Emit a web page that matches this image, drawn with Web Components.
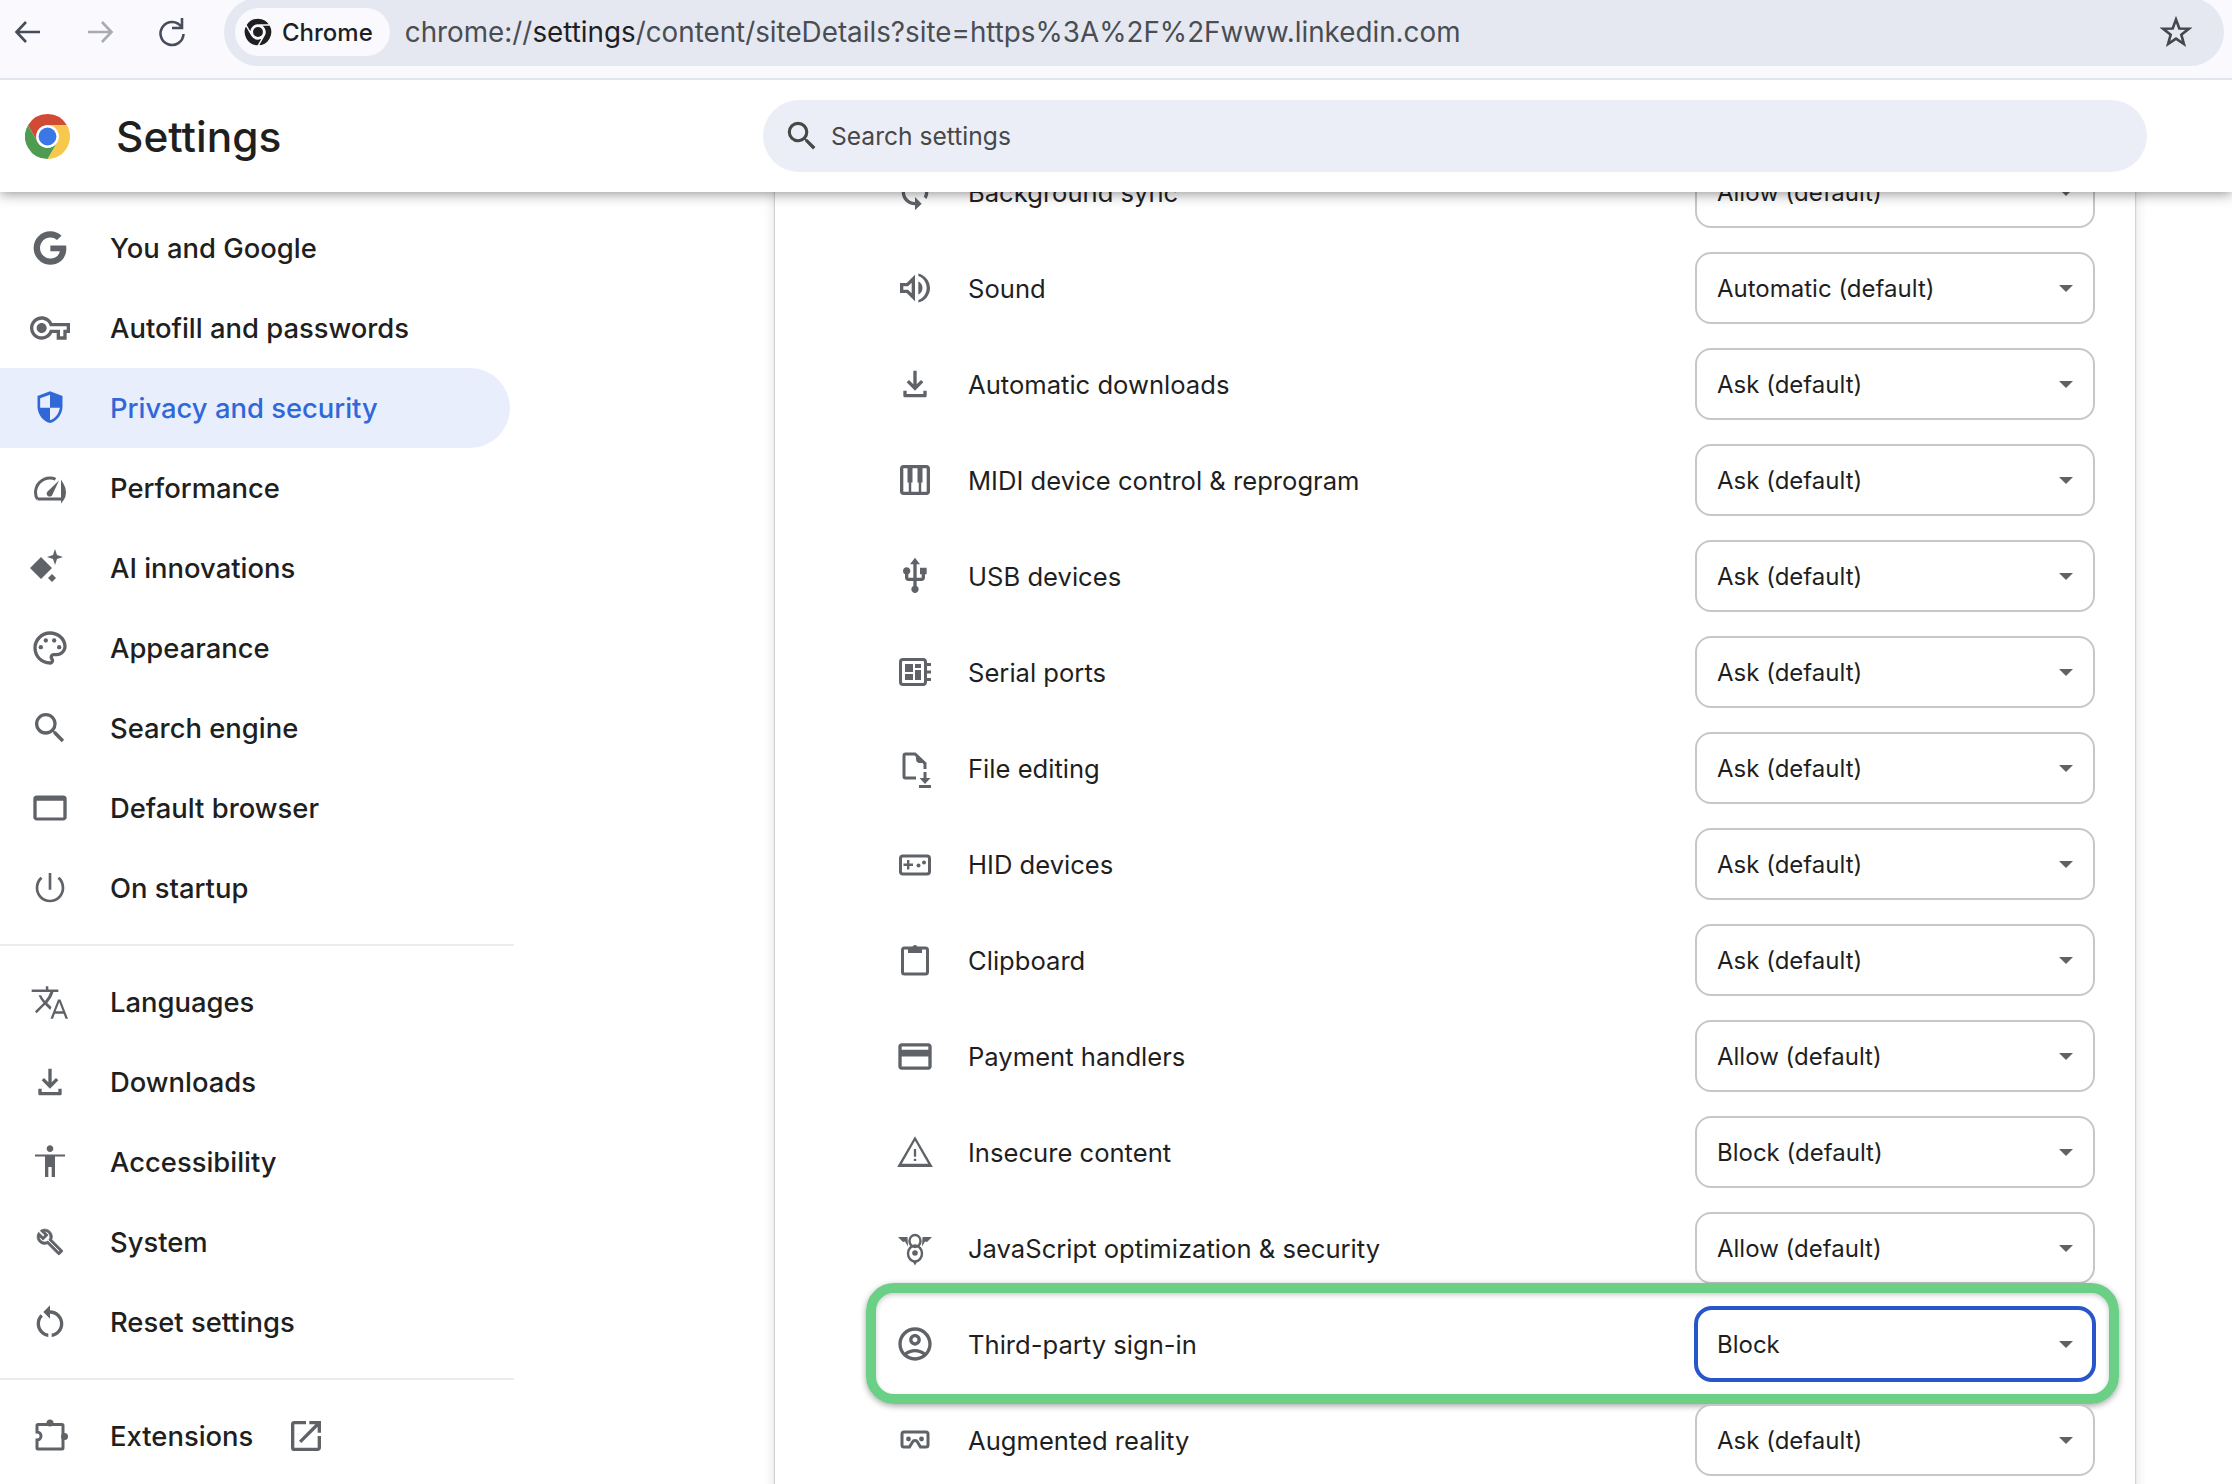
<!DOCTYPE html>
<html>
<head>
<meta charset="utf-8">
<title>Settings</title>
<style>
  html, body { margin: 0; height: 100%; overflow: hidden; background: #fff; }
  body { display: flex; flex-direction: column; font-family: Inter, "Liberation Sans", sans-serif; color: #1f1f1f; }
  settings-main { flex: 1; min-height: 0; }
</style>
</head>
<body>
<browser-bar url-start="chrome://" url-bold="settings" url-end="/content/siteDetails?site=https%3A%2F%2Fwww.linkedin.com"></browser-bar>
<settings-header></settings-header>
<settings-main>
  <settings-nav slot="nav"></settings-nav>
  <site-card slot="card"></site-card>
</settings-main>

<script>
const ICONS = {
  g: '<svg viewBox="-2.4 -2.4 28.8 28.8"><path d="M12.24 10.285V14.4h6.806c-.275 1.765-2.056 5.174-6.806 5.174-4.095 0-7.439-3.389-7.439-7.574s3.345-7.574 7.439-7.574c2.33 0 3.891.989 4.785 1.849l3.254-3.138C18.189 1.186 15.479 0 12.24 0c-6.635 0-12 5.365-12 12s5.365 12 12 12c6.926 0 11.52-4.869 11.52-11.726 0-.788-.085-1.39-.189-1.989H12.24z"/></svg>',
  key: '<svg viewBox="0 0 24 24"><path d="M22 19h-6v-4h-2.68c-1.14 2.42-3.6 4-6.32 4-3.86 0-7-3.14-7-7s3.14-7 7-7c2.72 0 5.17 1.58 6.32 4H24v6h-2v4zm-4-2h2v-4h2v-2H11.94l-.23-.67C11.01 8.34 9.11 7 7 7c-2.76 0-5 2.24-5 5s2.24 5 5 5c2.11 0 4.01-1.34 4.71-3.33l.23-.67H18v4zM7 15c-1.65 0-3-1.35-3-3s1.35-3 3-3 3 1.35 3 3-1.35 3-3 3z"/></svg>',
  shield: '<svg viewBox="0 0 24 24"><path d="M12 2 4.5 4.8v6.1c0 4.7 3.2 9 7.5 10.1 4.3-1.1 7.5-5.4 7.5-10.1V4.8L12 2zm0 9.9h5.9c-.4 3.4-2.8 6.5-5.9 7.5v-7.5H6.1V6.2L12 4v7.9z"/></svg>',
  gauge: '<svg viewBox="0 0 40 40"><path fill="none" stroke="currentColor" stroke-width="3" d="M7.5 31C6 29 5.5 26.5 5.5 24.5A14.5 14.5 0 0 1 20 10c2 0 4 .4 5.5 1.2M32.5 17c1.3 2.2 2 5 2 7.5 0 2-.5 4.5-2 6.5zM7.5 31h25"/><path d="M29 12.5 22.500 26.500a3 3 0 1 1-5-3z"/></svg>',
  spark: '<svg viewBox="0 0 40 40"><path d="M11 9 22 20 11 31 0 20zM22 26l4 4-4 4-4-4zM25 1l2 6 6 2-6 2-2 6-2-6-6-2 6-2z"/></svg>',
  palette: '<svg viewBox="0 0 24 24"><path d="M12 22C6.49 22 2 17.51 2 12S6.49 2 12 2s10 4.04 10 9c0 3.31-2.69 6-6 6h-1.77c-.28 0-.5.22-.5.5 0 .12.05.23.13.33.41.47.64 1.06.64 1.67A2.5 2.5 0 0 1 12 22zm0-18c-4.41 0-8 3.59-8 8s3.59 8 8 8c.28 0 .5-.22.5-.5a.54.54 0 0 0-.14-.35c-.41-.46-.63-1.05-.63-1.65a2.5 2.5 0 0 1 2.5-2.5H16c2.21 0 4-1.79 4-4 0-3.86-3.59-7-8-7z"/><circle cx="6.5" cy="11.5" r="1.3"/><circle cx="9.5" cy="7.5" r="1.3"/><circle cx="14.5" cy="7.5" r="1.3"/><circle cx="17.5" cy="11.5" r="1.3"/></svg>',
  search: '<svg viewBox="0 0 24 24"><path d="M15.5 14h-.79l-.28-.27A6.471 6.471 0 0 0 16 9.5 6.5 6.5 0 1 0 9.5 16c1.61 0 3.09-.59 4.23-1.57l.27.28v.79l5 4.99L20.49 19l-4.99-5zm-6 0C7.01 14 5 11.99 5 9.5S7.01 5 9.5 5 14 7.01 14 9.5 11.99 14 9.5 14z"/></svg>',
  browser: '<svg viewBox="0 0 24 24"><path d="M20 4.5H4c-1 0-2 .8-2 1.8v11.4c0 1 1 1.8 2 1.8h16c1 0 2-.8 2-1.8V6.3c0-1-1-1.8-2-1.8zm0 13.2H4V7.7h16v10z"/></svg>',
  power: '<svg viewBox="0 0 24 24"><path d="M12.8 3h-1.6v10h1.6V3zm4.9 2.2-1.2 1.2C18 7.7 19 9.8 19 12c0 3.87-3.13 7-7 7s-7-3.13-7-7c0-2.2 1-4.3 2.5-5.6L6.3 5.2C4.3 6.8 3.4 9.3 3.4 12c0 4.75 3.85 8.6 8.6 8.6s8.6-3.85 8.6-8.6c0-2.7-.9-5.2-2.9-6.8z"/></svg>',
  translate: '<svg viewBox="0 0 24 24"><path d="M12.87 15.07l-2.54-2.51.03-.03c1.74-1.94 2.98-4.17 3.71-6.53H17V4.5h-6v-2H9.500v2H1V6h11.170C11.500 7.920 10.440 9.750 9 11.350 8.070 10.320 7.300 9.190 6.690 8h-1.600c.73 1.630 1.730 3.170 2.980 4.560l-5.090 5.020L4 18.700l5-5 3.110 3.110.76-1.740zM18.300 10.500h-1.500L12.300 22h1.500l1.120-3h5.250l1.130 3h1.500l-4.500-11.500zm-2.900 7l2.150-5.330 2.100 5.330H15.400z"/></svg>',
  download: '<svg viewBox="0 0 24 24"><path d="M12 16 7 11l1.400-1.450 2.600 2.600V4h2v8.150l2.600-2.600L17 11l-5 5zm-6 4c-.55 0-1-.45-1-1v-3h2v2h10v-2h2v3c0 .55-.45 1-1 1H6z"/></svg>',
  access: '<svg viewBox="0 0 24 24"><path d="M12 2c1.100 0 2 .9 2 2s-.9 2-2 2-2-.9-2-2 .9-2 2-2zm9 5.500v1.200h-6V21h-2v-6h-2v6H9V8.700H3V7.500h18z"/></svg>',
  wrench: '<svg viewBox="-5.15 -5.15 34.3 34.3"><path stroke="currentColor" stroke-width=".7" d="M22.61 18.99l-9.08-9.08c.93-2.34.45-5.1-1.44-7C9.79.61 6.21.4 3.66 2.25L7.5 6.1 6.08 7.51 2.25 3.69C.39 6.23.61 9.82 2.91 12.11c1.86 1.86 4.57 2.35 6.89 1.48l9.11 9.11c.39.39 1.02.39 1.41 0l2.3-2.3c.4-.38.4-1.01-.01-1.41zm-3 1.6l-9.46-9.46c-.61.45-1.29.72-2 .82-1.36.2-2.79-.21-3.83-1.25C3.37 9.76 2.93 8.5 3 7.26l3.09 3.09 4.24-4.24-3.09-3.09c1.24-.07 2.49.37 3.44 1.31a4.469 4.469 0 0 1 1.24 3.96 4.35 4.35 0 0 1-.88 1.96l9.45 9.45-.88.88z"/></svg>',
  reset: '<svg viewBox="0 0 24 24"><path d="M12 5V2L8 6l4 4V7c3.31 0 6 2.69 6 6 0 2.97-2.17 5.43-5 5.91v2.02c3.95-.49 7-3.85 7-7.93 0-4.42-3.58-8-8-8zm-6 8c0-1.65.67-3.15 1.76-4.24L6.34 7.34A8.014 8.014 0 0 0 4 13c0 4.08 3.05 7.44 7 7.93v-2.02c-2.83-.48-5-2.94-5-5.91z"/></svg>',
  puzzle: '<svg viewBox="0 0 40 40"><path fill="none" stroke="currentColor" stroke-width="3" d="M8 8.5h24a1 1 0 0 1 1 1V32a1 1 0 0 1-1 1H8a1 1 0 0 1-1-1v-8a4 4 0 0 0 0-8V9.500a1 1 0 0 1 1-1z"/><circle cx="20" cy="7" r="3.500"/><circle cx="34.500" cy="20.500" r="3.500"/></svg>',
  open: '<svg viewBox="0 0 24 24"><path d="M19 19H5V5h7V3H5a2 2 0 0 0-2 2v14a2 2 0 0 0 2 2h14c1.100 0 2-.9 2-2v-7h-2v7zM14 3v2h3.590l-9.830 9.830 1.410 1.410L19 6.410V10h2V3h-7z"/></svg>',
  sync: '<svg viewBox="0 0 24 24"><path d="M12 4V1L8 5l4 4V6c3.310 0 6 2.690 6 6 0 1.010-.25 1.970-.7 2.800l1.460 1.460C19.540 15.030 20 13.570 20 12c0-4.420-3.580-8-8-8zm0 14c-3.310 0-6-2.690-6-6 0-1.010.25-1.970.7-2.800L5.240 7.740C4.460 8.970 4 10.430 4 12c0 4.420 3.580 8 8 8v3l4-4-4-4v3z"/></svg>',
  sound: '<svg viewBox="0 0 24 24"><path d="M3 9v6h4l5 5V4L7 9H3zm7-.17v6.340L7.830 13H5v-2h2.830L10 8.830zM16.500 12c0-1.770-1.020-3.290-2.500-4.030v8.050c1.480-.73 2.500-2.250 2.500-4.020zM14 3.230v1.600c2.890.86 5 3.900 5 7.170s-2.110 6.310-5 7.170v1.600c4.010-.91 7-4.490 7-8.770 0-4.280-2.990-7.860-7-8.770z"/></svg>',
  piano: '<svg viewBox="0 0 24 24"><path d="M19 3H5c-1.100 0-2 .9-2 2v14c0 1.100.9 2 2 2h14c1.100 0 2-.9 2-2V5c0-1.100-.9-2-2-2zm-5.500 2v8.500h.75V19h-4.500v-5.500h.75V5h3zM5 5h2.500v8.500h.75V19H5V5zm14 14h-3.250v-5.500h.75V5H19v14z"/></svg>',
  usb: '<svg viewBox="0 0 24 24"><path d="M15 7v4h1v2h-3V5h2l-3-4-3 4h2v8H8v-2.070c.7-.37 1.200-1.080 1.200-1.930 0-1.210-.99-2.200-2.200-2.200-1.210 0-2.200.99-2.200 2.200 0 .85.5 1.560 1.200 1.930V13c0 1.110.89 2 2 2h3v3.050c-.71.37-1.200 1.100-1.200 1.950 0 1.220.99 2.200 2.200 2.200 1.210 0 2.200-.98 2.200-2.200 0-.85-.49-1.580-1.200-1.950V15h3c1.110 0 2-.89 2-2v-2h1V7h-4z"/></svg>',
  serial: '<svg viewBox="0 0 40 40"><rect x="5.500" y="7.500" width="25" height="25" rx="2.500" fill="none" stroke="currentColor" stroke-width="3"/><path d="M10 12h8v8h-8zM20 12h6v4h-6zM10 22h8v6h-8zM20 18h6v10h-6zM32 11h4v3h-4zM32 18.500h4v3h-4zM32 26h4v3h-4z"/></svg>',
  file: '<svg viewBox="0 0 40 40"><path fill="none" stroke="currentColor" stroke-width="3" d="M21 30H10.500A1.500 1.500 0 0 1 9 28.500V7.500A1.500 1.500 0 0 1 10.500 6H20l10 9.500V21"/><path d="M21 6l9 9h-5a4 4 0 0 1-4-4zM28.500 24h3v6h4L30 36l-5.500-6h4zM24 37h12v3H24z"/></svg>',
  hid: '<svg viewBox="0 0 40 40"><rect x="5.500" y="12" width="29" height="18" rx="2.500" fill="none" stroke="currentColor" stroke-width="3"/><path d="M8.500 19.500h3.500V16h2.400v3.500h3.600v2.400h-3.600v3.600H12v-3.600H8.500z"/><circle cx="23.500" cy="21.500" r="2"/><circle cx="29" cy="18.500" r="2"/></svg>',
  clip: '<svg viewBox="0 0 40 40"><rect x="7.500" y="8" width="25" height="26" rx="2" fill="none" stroke="currentColor" stroke-width="3"/><path d="M13 7h4.500a2.600 2.600 0 0 1 5 0H27v6H13z"/></svg>',
  card: '<svg viewBox="0 0 24 24"><path d="M20 4H4c-1.110 0-1.990.89-1.990 2L2 18c0 1.110.89 2 2 2h16c1.110 0 2-.89 2-2V6c0-1.110-.89-2-2-2zm0 14H4v-6h16v6zm0-10H4V6h16v2z" transform="translate(0 .3)"/></svg>',
  warn: '<svg viewBox="0 0 24 24"><path d="M12 5.200 19.900 19H4.100L12 5.200M12 2.500 1.300 21h21.400L12 2.500zm.7 13.500h-1.400v1.400h1.400V16zm0-5.800h-1.400v4.600h1.400v-4.600z"/></svg>',
  v8: '<svg viewBox="0 0 40 40"><path d="M3 9h9.500l.5 9.500-3-5-2 .5zM37 9H27.500L27 18.500l3-5 2 .5zM18 34h4l-2 3.500z"/><ellipse cx="20" cy="13" rx="5.500" ry="6" fill="none" stroke="currentColor" stroke-width="2.400"/><ellipse cx="20" cy="25.500" rx="7" ry="8" fill="none" stroke="currentColor" stroke-width="2.400"/><circle cx="20" cy="25" r="2.800"/></svg>',
  person: '<svg viewBox="0 0 24 24"><path d="M12 2C6.480 2 2 6.480 2 12s4.480 10 10 10 10-4.480 10-10S17.520 2 12 2zM7.350 18.500C8.660 17.560 10.260 17 12 17s3.340.56 4.650 1.500c-1.310.94-2.910 1.500-4.650 1.500s-3.340-.56-4.650-1.500zm10.790-1.380C16.450 15.800 14.320 15 12 15s-4.450.8-6.140 2.120C4.700 15.730 4 13.950 4 12c0-4.420 3.580-8 8-8s8 3.580 8 8c0 1.950-.7 3.730-1.860 5.120zM12 6c-1.930 0-3.500 1.570-3.500 3.500S10.070 13 12 13s3.500-1.570 3.500-3.500S13.930 6 12 6zm0 5c-.83 0-1.500-.67-1.500-1.500S11.170 8 12 8s1.500.67 1.500 1.500S12.830 11 12 11z"/></svg>',
  vr: '<svg viewBox="0 0 40 40"><path fill="none" stroke="currentColor" stroke-width="3" d="M9 12h22a2 2 0 0 1 2 2v11a2 2 0 0 1-2 2h-5.500l-3-5a2.800 2.800 0 0 0-5 0l-3 5H9a2 2 0 0 1-2-2V14a2 2 0 0 1 2-2z"/><circle cx="13.500" cy="19" r="2.400"/><circle cx="26.500" cy="19" r="2.400"/></svg>'
};

class BrowserBar extends HTMLElement {
  constructor() {
    super();
    const shadow = this.attachShadow({ mode: "open" });
    shadow.innerHTML = `
      <style>
        :host { display: flex; align-items: flex-start; height: 78px; background: #f9f9fe; border-bottom: 2px solid #e1e5ee; overflow: hidden; }
        .nav { display: flex; justify-content: center; padding-top: 14px; color: #474c5a; }
        .nav.off { color: #a9abb2; }
        .nav svg { width: 36px; height: 36px; fill: none; stroke: currentColor; stroke-width: 2.6; }
        .omni { margin: -2px 8px 0 24px; flex: 1; height: 68px; border-radius: 34px; background: #e5e8f1; display: flex; align-items: center; padding: 0 12px 0 11px; }
        .chip { display: flex; align-items: center; height: 48px; padding: 0 17px 0 9px; border-radius: 24px; background: #f9f9fe; font-size: 24px; font-weight: 500; color: #1f1f1f; gap: 10px; }
        .chip svg { width: 28px; height: 28px; display: block; }
        .url { margin-left: 15px; font-size: 27.8px; color: #4a4d52; flex: 1; white-space: nowrap; }
        .url b { font-weight: 400; color: #1f1f1f; }
        .star { width: 32px; height: 32px; fill: none; stroke: #44474e; stroke-width: 2.6; margin-right: 20px; }
      </style>
      <div class="nav" style="width:56px"><svg viewBox="0 0 36 36"><path d="M30 18H7M16 8 6.500 18l9.500 10"/></svg></div>
      <div class="nav off" style="width:88px"><svg viewBox="0 0 36 36"><path d="M6 18h23M20 8l9.500 10L20 28"/></svg></div>
      <div class="nav" style="width:56px"><svg viewBox="0 0 36 36"><path d="M27.500 13A11.500 11.500 0 1 0 29.500 20"/><path d="M28 4v10H18"/></svg></div>
      <div class="omni">
        <div class="chip">
          <svg viewBox="0 0 48 48"><path fill="#1f1f1f" d="M3.210 12A24 24 0 0 1 44.780 12H24A12 12 0 0 0 13.610 30zM44.780 12A24 24 0 0 1 24 48L34.390 30A12 12 0 0 0 24 12zM24 48A24 24 0 0 1 3.210 12L13.610 30A12 12 0 0 0 34.390 30z" stroke="#f9f9fe" stroke-width="2.500"/><circle cx="24" cy="24" r="8.500" fill="#1f1f1f"/></svg>
          <span>Chrome</span>
        </div>
        <div class="url">${this.getAttribute("url-start")}<b>${this.getAttribute("url-bold")}</b>${this.getAttribute("url-end")}</div>
        <svg class="star" viewBox="0 0 32 32"><path d="M16 3.500 19.300 12.500 28.800 12.800 21.300 18.700 23.900 28 16 22.600 8.100 28 10.700 18.700 3.200 12.800 12.700 12.500z"/></svg>
      </div>
    `;
  }
}
customElements.define("browser-bar", BrowserBar);

class SettingsHeader extends HTMLElement {
  constructor() {
    super();
    const shadow = this.attachShadow({ mode: "open" });
    shadow.innerHTML = `
      <style>
        :host { display: flex; align-items: center; height: 112px; background: #fff; position: relative; z-index: 2; box-shadow: 0 2px 12px rgba(0,0,0,.42); clip-path: inset(0 0 -30px 0); }
        svg.logo { width: 45px; height: 45px; margin-left: 25px; flex: none; }
        h1 { margin: 0 0 0 46px; width: 647px; font-size: 42.4px; font-weight: 500; color: #1f1f1f; }
        .search { flex: none; width: 1384px; height: 72px; border-radius: 36px; background: #ebeef7; display: flex; align-items: center; box-sizing: border-box; padding-left: 20px; gap: 10px; font-size: 24.6px; color: #474747; }
        .search svg { width: 38px; height: 38px; fill: #474747; }
      </style>
      <svg class="logo" viewBox="0 0 48 48">
        <path fill="#d04a36" d="M3.210 12A24 24 0 0 1 44.780 12H24A12 12 0 0 0 13.610 30z"/>
        <path fill="#f6c94c" d="M44.780 12A24 24 0 0 1 24 48L34.390 30A12 12 0 0 0 24 12z"/>
        <path fill="#4f9b52" d="M24 48A24 24 0 0 1 3.210 12L13.610 30A12 12 0 0 0 34.390 30z"/>
        <circle cx="24" cy="24" r="12" fill="#fff"/><circle cx="24" cy="24" r="9.500" fill="#3b78e7"/>
      </svg>
      <h1>Settings</h1>
      <div class="search">${ICONS.search}<span>Search settings</span></div>
    `;
  }
}
customElements.define("settings-header", SettingsHeader);

class SettingsMain extends HTMLElement {
  constructor() {
    super();
    const shadow = this.attachShadow({ mode: "open" });
    shadow.innerHTML = `
      <style>
        :host { display: grid; grid-template-columns: 775px 1360px; overflow: hidden; }
      </style>
      <slot name="nav"></slot>
      <slot name="card"></slot>
    `;
  }
}
customElements.define("settings-main", SettingsMain);

class NavItem extends HTMLElement {
  constructor() {
    super();
    const shadow = this.attachShadow({ mode: "open" });
    shadow.innerHTML = `
      <style>
        :host { display: flex; align-items: center; height: 80px; width: 510px; color: #1f1f1f; font-size: 27.4px; font-weight: 500; box-sizing: border-box; border-radius: 0 40px 40px 0; }
        :host([active]) { background: #e8eefc; color: #3068d8; }
        .icon { width: 40px; height: 40px; margin-left: 30px; margin-right: 40px; fill: #5f6368; color: #5f6368; flex: none; }
        :host([active]) .icon { fill: #3068d8; }
        .extra { width: 40px; height: 40px; margin-left: 33px; fill: #5f6368; }
        svg { display: block; width: 100%; height: 100%; }
      </style>
      <div class="icon">${ICONS[this.getAttribute("icon")]}</div>
      <slot></slot>
      ${this.hasAttribute("extra") ? `<div class="extra">${ICONS[this.getAttribute("extra")]}</div>` : ""}
    `;
  }
}
customElements.define("nav-item", NavItem);

class SettingsNav extends HTMLElement {
  constructor() {
    super();
    const shadow = this.attachShadow({ mode: "open" });
    shadow.innerHTML = `
      <style>
        :host { display: block; padding-top: 16px; }
        hr { width: 514px; margin: 16px 0; border: 0; height: 2px; background: #ececec; }
      </style>
      <nav-item icon="g">You and Google</nav-item>
      <nav-item icon="key">Autofill and passwords</nav-item>
      <nav-item icon="shield" active>Privacy and security</nav-item>
      <nav-item icon="gauge">Performance</nav-item>
      <nav-item icon="spark">AI innovations</nav-item>
      <nav-item icon="palette">Appearance</nav-item>
      <nav-item icon="search">Search engine</nav-item>
      <nav-item icon="browser">Default browser</nav-item>
      <nav-item icon="power">On startup</nav-item>
      <hr>
      <nav-item icon="translate">Languages</nav-item>
      <nav-item icon="download">Downloads</nav-item>
      <nav-item icon="access">Accessibility</nav-item>
      <nav-item icon="wrench">System</nav-item>
      <nav-item icon="reset">Reset settings</nav-item>
      <hr>
      <nav-item icon="puzzle" extra="open">Extensions</nav-item>
    `;
  }
}
customElements.define("settings-nav", SettingsNav);

class PermissionRow extends HTMLElement {
  constructor() {
    super();
    const shadow = this.attachShadow({ mode: "open" });
    shadow.innerHTML = `
      <style>
        :host { display: flex; align-items: center; height: 96px; position: relative; font-size: 25.6px; color: #1f1f1f; }
        .icon { width: 40px; height: 40px; margin-left: 120px; margin-right: 33px; fill: #5f6368; color: #5f6368; flex: none; }
        .icon svg { display: block; width: 100%; height: 100%; }
        .label { flex: 1; }
        .select { width: 400px; height: 72px; box-sizing: border-box; margin-right: 40px; border: 2px solid #c7c7c7; border-radius: 16px; display: flex; align-items: center; justify-content: space-between; padding: 0 20px 0 20px; background: #fff; font-size: 24px; }
        .select i { width: 0; height: 0; border-style: solid; border-width: 7px 7px 0; border-color: #5f6368 transparent transparent; }
        :host([focused]) .select { border: 4px solid #2856c8; width: 402px; height: 76px; margin-right: 39px; padding: 0 19px 0 19px; border-radius: 18px; }
        :host([focused])::after { content: ""; position: absolute; left: 91px; right: 16px; top: -13px; bottom: -12px; border: 10px solid #6bcf85; border-radius: 28px; box-shadow: 0 2px 6px rgba(0,0,0,.35), inset 0 2px 5px rgba(0,0,0,.2); pointer-events: none; }
      </style>
      <div class="icon">${ICONS[this.getAttribute("icon")]}</div>
      <div class="label"><slot></slot></div>
      <div class="select"><span>${this.getAttribute("value")}</span><i></i></div>
    `;
  }
}
customElements.define("permission-row", PermissionRow);

class SiteCard extends HTMLElement {
  constructor() {
    super();
    const shadow = this.attachShadow({ mode: "open" });
    const rows = [
      ["sync", "Background sync", "Allow (default)"],
      ["sound", "Sound", "Automatic (default)"],
      ["download", "Automatic downloads", "Ask (default)"],
      ["piano", "MIDI device control & reprogram", "Ask (default)"],
      ["usb", "USB devices", "Ask (default)"],
      ["serial", "Serial ports", "Ask (default)"],
      ["file", "File editing", "Ask (default)"],
      ["hid", "HID devices", "Ask (default)"],
      ["clip", "Clipboard", "Ask (default)"],
      ["card", "Payment handlers", "Allow (default)"],
      ["warn", "Insecure content", "Block (default)"],
      ["v8", "JavaScript optimization & security", "Allow (default)"],
      ["person", "Third-party sign-in", "Block"],
      ["vr", "Augmented reality", "Ask (default)"],
    ];
    shadow.innerHTML = `
      <style>
        :host { display: block; background: #fff; box-shadow: 0 0 2px rgba(0,0,0,.35), 0 0 12px rgba(0,0,0,.14); margin-top: -48px; height: 1400px; }
      </style>
      ${rows.map(r => `<permission-row icon="${r[0]}" value="${r[2]}" ${r[2] === "Block" ? "focused" : ""}>${r[1].replace("&", "&amp;")}</permission-row>`).join("")}
    `;
  }
}
customElements.define("site-card", SiteCard);
</script>
</body>
</html>
